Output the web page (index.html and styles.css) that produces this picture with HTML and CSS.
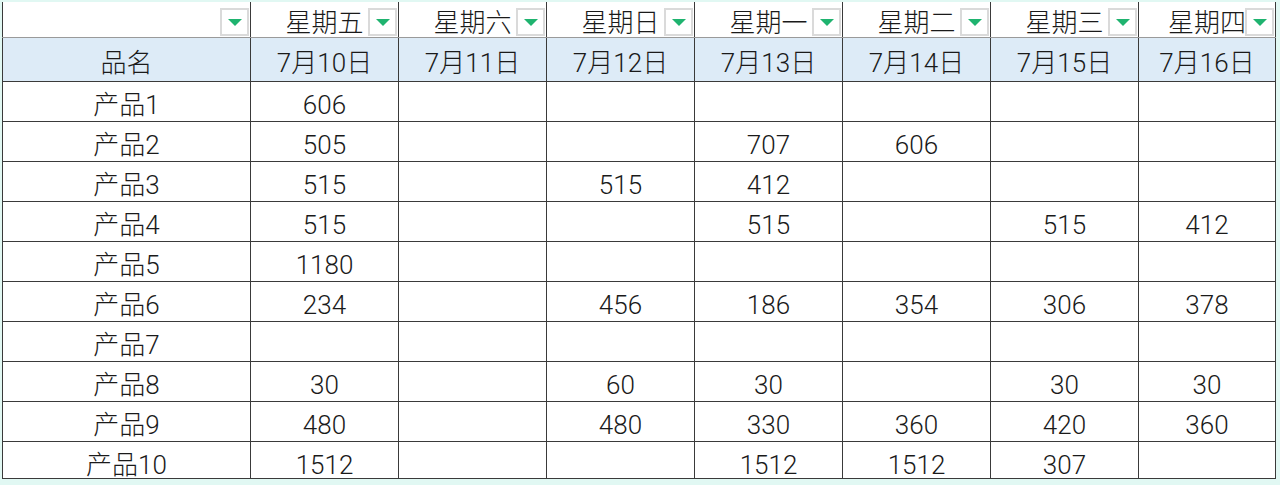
FILE: index.html
```html
<!DOCTYPE html>
<html lang="zh-CN">
<head>
<meta charset="utf-8">
<title>销售表</title>
<link rel="stylesheet" href="styles.css">
</head>
<body>
<div class="sheet">
<table class="grid">
<colgroup>
<col class="c-name"><col class="c-day"><col class="c-day"><col class="c-day"><col class="c-day"><col class="c-day"><col class="c-day"><col class="c-last">
</colgroup>
<tr class="filter-row">
<td class="fcell"><span class="fbtn"><span class="tri"></span></span></td>
<td class="fcell">星期五<span class="fbtn"><span class="tri"></span></span></td>
<td class="fcell">星期六<span class="fbtn"><span class="tri"></span></span></td>
<td class="fcell">星期日<span class="fbtn"><span class="tri"></span></span></td>
<td class="fcell">星期一<span class="fbtn"><span class="tri"></span></span></td>
<td class="fcell">星期二<span class="fbtn"><span class="tri"></span></span></td>
<td class="fcell">星期三<span class="fbtn"><span class="tri"></span></span></td>
<td class="fcell">星期四<span class="fbtn"><span class="tri"></span></span></td>
</tr>
<tr class="head-row">
<td>品名</td><td>7月10日</td><td>7月11日</td><td>7月12日</td><td>7月13日</td><td>7月14日</td><td>7月15日</td><td>7月16日</td>
</tr>
<tr class="row"><td>产品1</td><td>606</td><td></td><td></td><td></td><td></td><td></td><td></td></tr>
<tr class="row"><td>产品2</td><td>505</td><td></td><td></td><td>707</td><td>606</td><td></td><td></td></tr>
<tr class="row"><td>产品3</td><td>515</td><td></td><td>515</td><td>412</td><td></td><td></td><td></td></tr>
<tr class="row"><td>产品4</td><td>515</td><td></td><td></td><td>515</td><td></td><td>515</td><td>412</td></tr>
<tr class="row"><td>产品5</td><td>1180</td><td></td><td></td><td></td><td></td><td></td><td></td></tr>
<tr class="row"><td>产品6</td><td>234</td><td></td><td>456</td><td>186</td><td>354</td><td>306</td><td>378</td></tr>
<tr class="row"><td>产品7</td><td></td><td></td><td></td><td></td><td></td><td></td><td></td></tr>
<tr class="row"><td>产品8</td><td>30</td><td></td><td>60</td><td>30</td><td></td><td>30</td><td>30</td></tr>
<tr class="row"><td>产品9</td><td>480</td><td></td><td>480</td><td>330</td><td>360</td><td>420</td><td>360</td></tr>
<tr class="row last"><td>产品10</td><td>1512</td><td></td><td></td><td>1512</td><td>1512</td><td>307</td><td></td></tr>
</table>
</div>
</body>
</html>
```
FILE: styles.css
```css
html, body {
  margin: 0;
  padding: 0;
  background: #e1f8f3;
}
body {
  width: 1280px;
  height: 485px;
  overflow: hidden;
}
.sheet {
  padding: 2px 0 0 2px;
}
.grid {
  border-collapse: collapse;
  table-layout: fixed;
  width: 1274px;
  background: #ffffff;
  font-family: "Roboto", "Noto Sans CJK SC", sans-serif;
  font-weight: 300;
  font-size: 26px;
  color: #1a1a1a;
}
.c-name { width: 248px; }
.c-day { width: 148px; }
.c-last { width: 137px; }
.grid td {
  border: 1px solid #3a3a3a;
  text-align: center;
  vertical-align: middle;
  padding: 7px 0 0 0;
  line-height: 26px;
  white-space: nowrap;
  overflow: hidden;
}
.filter-row td {
  border-top: none;
  height: 29px;
  padding: 6px 0 0 0;
  position: relative;
  border-bottom: 1px solid #9a9a9a;
}
.head-row td {
  background: #ddebf7;
  height: 36px;
  border-top: 1px solid #333333;
}
.row td {
  height: 32px;
}
.row.last td {
  height: 27px;
  padding-top: 9px;
}
.fbtn {
  position: absolute;
  right: 1px;
  top: 6px;
  width: 25px;
  height: 24px;
  border: 2px solid #dadada;
  background: #ffffff;
  display: flex;
  align-items: center;
  justify-content: center;
}
.tri {
  width: 0;
  height: 0;
  border-left: 7px solid transparent;
  border-right: 7px solid transparent;
  border-top: 7px solid #1fb36f;
  margin-top: 1px;
}
```
